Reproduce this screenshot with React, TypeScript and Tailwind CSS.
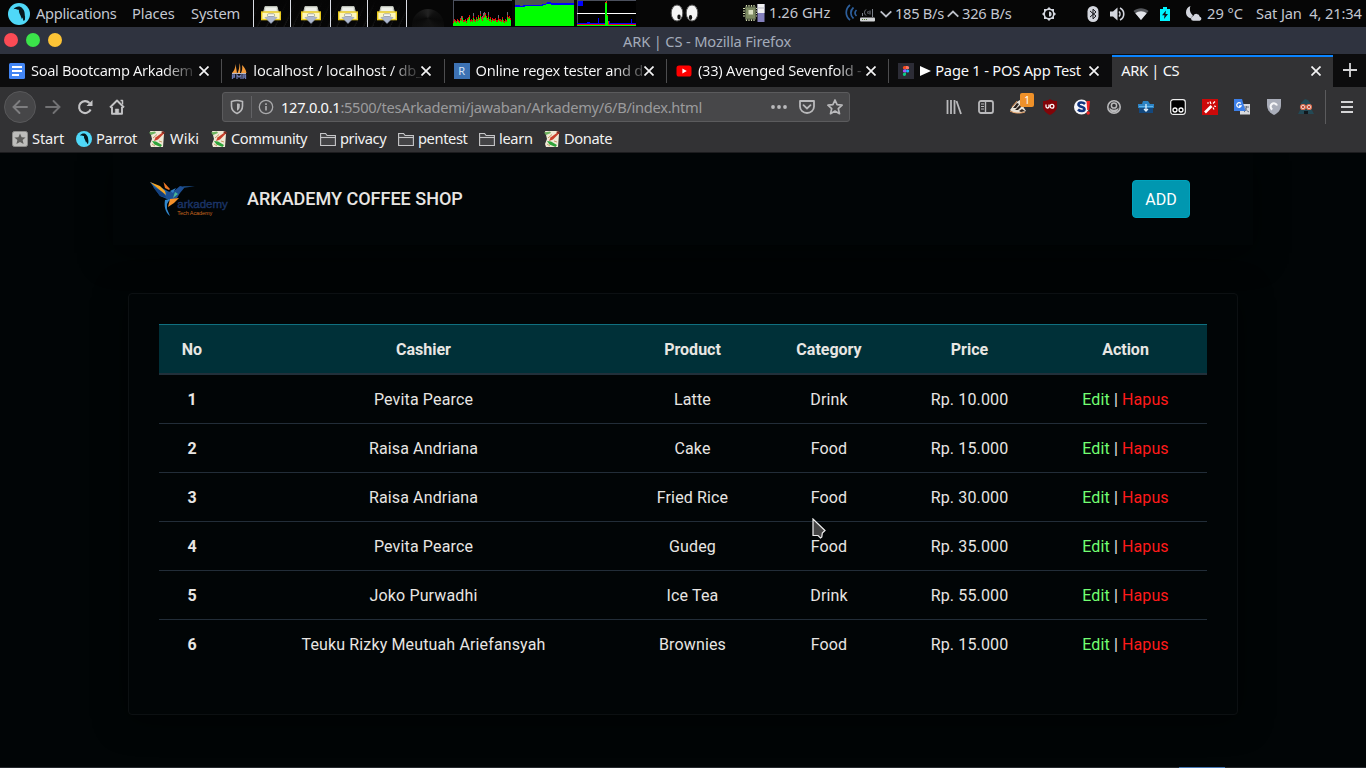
import React from "react";

type Kids = { children?: React.ReactNode };

const Parrot = ({ size }: { size: number }) => (
  <svg width={size} height={size} viewBox="0 0 22 22" className="shrink-0">
    <circle cx="11" cy="11" r="11" fill="#4fd8f8" />
    <path d="M5.500 6.200C8 3.200 12 2.600 14.500 5.400c2.600 2.800 2 5 2.600 8.400l-.2 3.200-1.400 1-1-3.600-.6 1.600-1.400-3.600c-1.400-2.600-1.600-3.400-1.600-5.600C9.600 6.800 7.600 5.600 5.500 6.200z" fill="#06181e" />
  </svg>
);

const Drawer = () => (
  <svg width="20" height="18" viewBox="0 0 20 18">
    <path d="M4 .5h12l1.500 6h-15z" fill="#dfe2da" stroke="#b9bdb4" />
    <path d="M5 2h10l.5 3h-11z" fill="#eef0ea" />
    <rect x=".7" y="6" width="18.600" height="7.600" fill="#fdf6bc" stroke="#e8c91d" strokeWidth="1.400" />
    <rect x="6.500" y="7.800" width="7" height="2.600" rx="1" fill="#fff" stroke="#a9a98a" />
    <path d="M5 11.500l2.500-1h5l2.500 1h1L10 17.500 4 11.500z" fill="#aeb8cf" stroke="#929cb3" strokeWidth=".6" />
  </svg>
);

const cpu = [3, 5, 4, 3, 5, 4, 3, 6, 5, 8, 4, 4, 5, 3, 6, 7, 9, 4, 5, 4, 8, 5, 4, 7, 5, 9, 6, 10, 7, 5, 8, 9, 11, 8, 6, 9, 5, 7, 4, 6, 5, 5, 6, 4, 4, 6, 5, 5, 4, 7, 4, 3, 5, 4, 9, 7, 8, 6];
const CpuGraph = () => (
  <svg width="59" height="26" viewBox="0 0 59 26" shapeRendering="crispEdges">
    <rect width="59" height="26" fill="#000" stroke="#4a4f5c" />
    {cpu.map((h, i) => (
      <g key={i}>
        {[8, 20, 27, 29, 30, 31, 35, 45, 54].includes(i) && <rect x={i} y={26 - h - 5} width="1" height="5" fill="#6b6f75" />}
        <rect x={i} y={26 - h - 2} width="1" height="2" fill="#e01010" />
        <rect x={i} y={26 - h} width="1" height={h} fill="#00ff00" />
      </g>
    ))}
  </svg>
);
const MemGraph = () => (
  <svg width="59" height="26" viewBox="0 0 59 26" shapeRendering="crispEdges">
    <rect width="59" height="26" fill="#4c5350" />
    <path d="M0 5h4l1 1 5-1h14l6-1 2-2 3 0 1 1h23v23H0z" fill="#0000ff" />
    <path d="M0 7h9l2-1h14l5-1 1-1 4 0 2 1h22v21H0z" fill="#00ff00" />
  </svg>
);
const NetGraph = () => (
  <svg width="59" height="26" viewBox="0 0 59 26" shapeRendering="crispEdges">
    <rect width="59" height="26" fill="#000" stroke="#4a4f5c" />
    <rect x="1" y="1" width="5" height="5" fill="#0000ff" />
    <path d="M0 23h10v-1h3v1h8v-5h1v5h6v-2h5v2h21v-4h1v4h4v2H0z" fill="#0000ff" />
    <rect y="24" width="59" height="1" fill="#f01010" />
    <rect y="13" width="59" height="1" fill="#fff" />
    <path d="M28 25V2h1v-1h1v14h1v6h1v4z" fill="#e03010" />
    <path d="M28 25V3h2v13h1v9z" fill="#00ff00" />
    <rect y="25" width="59" height="1" fill="#00ff00" />
  </svg>
);

const Eyes = () => (
  <svg width="30" height="18" viewBox="0 0 30 18">
    <ellipse cx="7" cy="9" rx="5.800" ry="8" fill="#f4f4f4" stroke="#555" />
    <ellipse cx="22" cy="9" rx="5.800" ry="8" fill="#f4f4f4" stroke="#555" />
    <ellipse cx="9" cy="13" rx="1.700" ry="2.400" fill="#111" />
    <ellipse cx="20.500" cy="13.500" rx="1.700" ry="2.400" fill="#111" />
  </svg>
);

const Chip = () => (
  <svg width="22" height="18" viewBox="0 0 22 18">
    <path d="M3.500 1v16M6 1v16M8.500 1v16M11 1v16M0 4.500h14M0 7h14M0 9.500h14M0 12h14" stroke="#d3dcae" strokeWidth="1.200" />
    <rect x="2.500" y="3" width="10" height="12" fill="#7d8a62" stroke="#59634a" />
    <rect x="5.500" y="6" width="4.500" height="4.500" fill="#d9dfc0" />
    <rect x="14.500" y="0" width="7" height="18" fill="#8480bd" />
    <rect x="14.500" y="0" width="7" height="9" fill="#f2f2f2" />
    <path d="M14.500 4h7" stroke="#b9b9c4" />
  </svg>
);

const Wireless = () => (
  <svg width="32" height="18" viewBox="0 0 32 18" fill="none">
    <path d="M5 1C0 5 0 12 5 16" stroke="#2d5f9c" strokeWidth="1.700" />
    <path d="M8.500 3.500c-3.500 3-3.500 8 0 11" stroke="#2d5f9c" strokeWidth="1.700" />
    <path d="M11.500 6c-2 2-2 4 0 6" stroke="#2d5f9c" strokeWidth="1.600" />
    <rect x="15" y="13.500" width="15" height="4" rx="1" fill="#d2d4d6" />
    <path d="M17 15.500h1M19 15.500h1M21 15.500h1" stroke="#567a34" />
    <path d="M27.500 13V5M17.500 9v3M23.500 7c-1 1-1 2 0 3M21 5.500c-2 2-2 4 0 6M25 6.500v4" stroke="#7b8089" strokeWidth="1" />
  </svg>
);

const Chevron = ({ up }: { up?: boolean }) => (
  <svg width="12" height="8" viewBox="0 0 12 8" fill="none" stroke="#bcc0c9" strokeWidth="1.800">
    <path d={up ? "M.7 6.700 6 1.500l5.300 5.200" : "M.7 1.300 6 6.500l5.300-5.200"} />
  </svg>
);

const Brightness = () => (
  <svg width="14" height="14" viewBox="0 0 14 14">
    <path d="M7 0l2 2h3v3l2 2-2 2v3H9l-2 2-2-2H2V9L0 7l2-2V2h3z" fill="#d3d6de" />
    <circle cx="7" cy="7" r="4" fill="#080808" />
    <path d="M7 4.400a2.600 2.600 0 010 5.200z" fill="#d3d6de" />
  </svg>
);
const Bluetooth = () => (
  <svg width="12" height="16" viewBox="0 0 12 16">
    <rect x=".5" width="11" height="16" rx="5.500" fill="#d3d6de" />
    <path d="M3 5l6 5-3 2.800V3.200L9 6l-6 5" fill="none" stroke="#15151a" strokeWidth="1" />
  </svg>
);
const Volume = () => (
  <svg width="16" height="14" viewBox="0 0 16 14">
    <path d="M0 4.500h3L7.500.5v13L3 9.500H0z" fill="#d3d6de" />
    <path d="M9 4.500c1.300 1.300 1.300 3.700 0 5M10 1c5 2.500 5 9.500 0 12" fill="none" stroke="#d3d6de" strokeWidth="1.600" />
  </svg>
);
const Wifi = () => (
  <svg width="16" height="12" viewBox="0 0 16 12">
    <path d="M.5 3C5-.8 11-.8 15.500 3L8 12z" fill="#55575c" />
    <path d="M2.300 5.200c3.400-2.700 8-2.700 11.400 0L8 12z" fill="#e3e5ea" />
  </svg>
);
const Battery = () => (
  <svg width="10" height="14" viewBox="0 0 10 14">
    <path d="M3 0h4v2h3v12H0V2h3z" fill="#00f4ff" />
    <path d="M6 3.500L2 8.300h2.500L4 12l4-5H5.500z" fill="#101418" />
  </svg>
);
const Moon = () => (
  <svg width="16" height="15" viewBox="0 0 16 15" fill="#d3d6de">
    <path d="M4.500 0C1.500.8 0 3.500 0 6.200 0 9.700 2.600 12 5.200 12.300 5.300 11 6 10 7 9.400 4.300 7.500 3 3.500 4.500 0z" />
    <path d="M7.500 14.800a2.400 2.400 0 01-.2-4.800 3.400 3.400 0 016.500.7 2.100 2.100 0 01-.1 4.100z" />
  </svg>
);

function Panel() {
  return (
    <header className="relative flex h-[27px] items-center bg-[#060606] text-[14.67px] leading-[27px] text-[#c3c7d1]">
      <div className="flex w-[253px] items-center pl-2">
        <Parrot size={22} />
        <span className="ml-[6px] w-[96px] tracking-[-0.32px]">Applications</span>
        <span className="w-[59px] tracking-[-0.1px]">Places</span>
        <span className="tracking-[-0.1px]">System</span>
      </div>
      <div className="flex h-full w-[154px] bg-[repeating-linear-gradient(115deg,#060606_0px,#060606_6px,#171717_8px)]">
        {["w-[37px] pl-[7px]", "w-[40px] pl-[10px]", "w-[37px] pl-[7px]", "w-[39px] pl-[9px]"].map((w, i) => (
          <div key={i} className={`${w} flex shrink-0 items-center border-l border-[#dadde4] bg-linear-to-b from-[#050505] to-transparent pt-[3px]`}>
            <Drawer />
          </div>
        ))}
        <i className="w-px shrink-0 bg-[#dadde4]" />
      </div>
      <div className="flex w-[46px] items-center pt-2 pl-[5px]">
        <i className="h-[18px] w-8 rounded-t-full bg-[conic-gradient(from_0deg,#303030,#151515,#0b0b0b,#181818,#151515,#0b0b0b,#1d1d1d,#303030)] opacity-70" />
      </div>
      <div className="flex h-full w-[217px] gap-[3px]">
        <CpuGraph />
        <MemGraph />
        <NetGraph />
      </div>
      <div className="w-[73px] pb-[1px]"><Eyes /></div>
      <div className="w-[26px] pb-[1px]"><Chip /></div>
      <span className="w-[76px] pb-[2px]">1.26 GHz</span>
      <div className="w-[35px] pb-[1px]"><Wireless /></div>
      <div className="w-[15px]"><Chevron /></div>
      <span className="w-[52px] tracking-[-0.3px]">185 B/s</span>
      <div className="w-[15px]"><Chevron up /></div>
      <span className="w-[80px] tracking-[-0.2px]">326 B/s</span>
      <div className="w-[45px]"><Brightness /></div>
      <div className="w-[23px]"><Bluetooth /></div>
      <div className="w-[23px]"><Volume /></div>
      <div className="w-[27px]"><Wifi /></div>
      <div className="w-[26px]"><Battery /></div>
      <div className="w-[21px]"><Moon /></div>
      <span className="w-[49px]">29 °C</span>
      <span className="whitespace-pre tracking-[-0.12px]">Sat Jan  4, 21:34</span>
    </header>
  );
}

function TitleBar() {
  return (
    <div className="relative flex h-[27px] items-center justify-center bg-[#2f333f] pl-12 text-[14.67px] text-[#a3abba]">
      <div className="absolute left-[4px] top-[6px] flex gap-2">
        <i className="size-[14px] rounded-full bg-[#fb4b55]" />
        <i className="size-[14px] rounded-full bg-[#3be34a]" />
        <i className="size-[14px] rounded-full bg-[#fdc436]" />
      </div>
      <span className="pt-[1px] tracking-[-0.15px]">ARK | CS - Mozilla Firefox</span>
    </div>
  );
}

const Cross = () => (
  <svg width="10" height="10" viewBox="0 0 10 10" className="shrink-0" fill="none" stroke="#f4f4f5" strokeWidth="1.700">
    <path d="M.5.5l9 9M9.500.5l-9 9" />
  </svg>
);

const DocsIcon = () => (
  <svg width="16" height="16"><rect width="16" height="16" rx="1.500" fill="#4285f4" /><path d="M3 4h10M3 8h10M3 12h7" stroke="#fff" strokeWidth="2" /></svg>
);
const PmaIcon = () => (
  <svg width="16" height="16" viewBox="0 0 16 16">
    <path d="M4.500 1L6 10H1c2-2 3.500-5 3.500-9zM8.500 0c1 3 1 6.500.5 10H6.500C8 7 8.500 4 8.500 0zM11 2c2.500 2 4 5 4.500 8H10c1.300-2.500 1.500-5 1-8z" fill="#f39b3b" />
    <path d="M1 10.500h14" stroke="#bdb9c4" strokeWidth="1" />
    <path d="M1.500 16v-4h2v2h-2M6 16v-4l2 2 2-2v4M12 16v-4h2.500v4M12 14h2.500" stroke="#6c78af" fill="none" strokeWidth="1.300" />
  </svg>
);
const RegexIcon = () => <span className="flex size-4 shrink-0 items-center justify-center bg-[#3d72b4] text-[11px] leading-4 text-[#d5e3f4]">R</span>;
const YoutubeIcon = () => (
  <svg width="16" height="16"><rect x=".5" y="2.500" width="15" height="11" rx="2.600" fill="#ff0000" /><path d="M6.400 5.600L10.800 8l-4.400 2.400z" fill="#fff" /></svg>
);
const FigmaIcon = () => (
  <svg width="16" height="16" viewBox="0 0 16 16">
    <rect width="16" height="16" fill="#2c2c36" />
    <path d="M8 3H6.500a1.600 1.600 0 000 3.300H8z" fill="#f24e1e" />
    <path d="M8 3h1.500a1.600 1.600 0 010 3.300H8z" fill="#ff7262" />
    <path d="M8 6.300H6.500a1.600 1.600 0 000 3.300H8z" fill="#a259ff" />
    <circle cx="9.600" cy="8" r="1.600" fill="#1abcfe" />
    <path d="M6.500 9.700H8v1.600a1.600 1.600 0 11-1.500-1.600z" fill="#0acf83" />
  </svg>
);

function Tab({ icon, title, spacing, fade }: { icon: React.ReactNode; title: string; spacing: string; fade: string }) {
  return (
    <div className="flex w-[222.300px] shrink-0 items-center pl-[9px]">
      {icon}
      <span className={`ml-[6px] w-[168px] pb-[2px] ${spacing}`}><span className={fade}>{title}</span></span>
      <Cross />
      <i className="ml-auto h-6 w-px bg-[#4d4d4f]" />
    </div>
  );
}

function Tabs() {
  return (
    <div className="flex h-[33px] bg-[#0c0c0d] text-[14.67px] text-[#f9f9fa]">
      <Tab icon={<DocsIcon />} title="Soal Bootcamp Arkadem" spacing="tracking-[-0.36px]" fade="bg-[linear-gradient(to_right,#f9f9fa_82%,#333334_100%)] bg-clip-text text-transparent" />
      <Tab icon={<PmaIcon />} title="localhost / localhost / db_" spacing="tracking-[-0.2px]" fade="bg-[linear-gradient(to_right,#f9f9fa_82%,#777778_90%,#202021_100%)] bg-clip-text text-transparent" />
      <Tab icon={<RegexIcon />} title="Online regex tester and d" spacing="tracking-[-0.3px]" fade="bg-[linear-gradient(to_right,#f9f9fa_82%,#444445_100%)] bg-clip-text text-transparent" />
      <Tab icon={<YoutubeIcon />} title="(33) Avenged Sevenfold -" spacing="tracking-[-0.25px]" fade="bg-[linear-gradient(to_right,#f9f9fa_84%,#333334_100%)] bg-clip-text text-transparent" />
      <div className="flex w-[223px] shrink-0 items-center pl-[9px]">
        <FigmaIcon />
        <span className="ml-[6px] flex w-[168px] items-center pb-[2px] tracking-[-0.2px]">
          <svg width="11" height="10" className="mr-[4px] mt-[2px]"><path d="M0 0l11 5-11 5z" fill="#fff" /></svg>
          Page 1 - POS App Test
        </span>
        <span className="ml-px"><Cross /></span>
      </div>
      <div className="mt-px flex w-[221px] shrink-0 items-center border-t-2 border-[#0a84ff] bg-[#323234] pb-[2px] pl-[9px]">
        <span className="w-[190px] pb-[2px] tracking-[-0.3px]">ARK | CS</span>
        <Cross />
      </div>
      <div className="flex flex-1 items-center justify-center pb-[2px]">
        <svg width="14" height="14" stroke="#d6d6d8" strokeWidth="1.800"><path d="M7 0v14M0 7h14" /></svg>
      </div>
    </div>
  );
}

const Cell = ({ children }: Kids) => <div className="flex w-8 shrink-0 items-center justify-center">{children}</div>;

const extensions: React.ReactNode[] = [
  <svg width="16" height="16" fill="none" stroke="#b9b9bb" strokeWidth="1.800"><path d="M1.500 1v14M5 1v14M8.500 1v14M10.500 2l4.500 13" /></svg>,
  <svg width="16" height="16" fill="none" stroke="#b9b9bb" strokeWidth="1.800"><rect x="1" y="2" width="14" height="12" rx="2" /><path d="M7.500 2v12" strokeWidth="1.400" /><path d="M3 5h3M3 7.500h3M3 10h3" strokeWidth="1" /></svg>,
  <div className="relative size-4">
    <svg width="16" height="16"><path d="M0 11C3 7 6 3 10 1l4 8 2 3-5 2H4z" fill="#e9e3d8" /><path d="M3 9l4-5 2 1-3 4zM5 11l5-5 1.500 1.500L8 11zM9 12l3-2 3 2-4 1z" fill="#2c221d" /><path d="M0 12c4 2 9 3 15 1" stroke="#e9a266" fill="none" /><path d="M2 8l5-6" stroke="#d98c4f" /></svg>
    <span className="absolute -top-[6px] left-[10px] h-[14px] w-[14px] rounded-[2px] bg-[#ef9129] text-center text-[10px] leading-[14px] text-white">1</span>
  </div>,
  <svg width="16" height="16"><path d="M8 0c2 1.500 4 2 7 2v5c0 4-2.500 7-7 9-4.500-2-7-5-7-9V2c3 0 5-.5 7-2z" fill="#820408" /><path d="M4 5.500v2a1.500 1.500 0 003 0v-2" fill="none" stroke="#fff" strokeWidth="1.300" /><circle cx="10" cy="7.300" r="1.900" fill="none" stroke="#fff" strokeWidth="1.300" /></svg>,
  <svg width="16" height="16"><circle cx="7.500" cy="8" r="7.500" fill="#f7f7fa" /><path d="M11 5C9 3 4.500 3 4.500 5.500c0 3 6 1.500 6 4.700 0 2.300-4.500 2.300-6.500.3" fill="none" stroke="#12357f" strokeWidth="2.600" /><path d="M12.500 2H16l-.8 9h-2z" fill="#ee2626" /><circle cx="14.200" cy="14" r="1.700" fill="#ee2626" /></svg>,
  <svg width="16" height="16"><circle cx="8" cy="8" r="6.200" fill="none" stroke="#b9b9bb" strokeWidth="1.600" /><circle cx="8" cy="6.500" r="2.600" fill="none" stroke="#b9b9bb" strokeWidth="1.500" /><path d="M3.500 8.500c2 3 7 3 9 0 0 3.500-2 5-4.500 5s-4.500-1.500-4.500-5z" fill="#b9b9bb" /></svg>,
  <svg width="16" height="16"><path d="M5 2h5l2 3h4v4H0V5h4z" fill="#2c83c4" /><path d="M1 9h14v5H1z" fill="#14487d" /><path d="M1 7h14v1H1z" fill="#5fb1e6" /><path d="M8 5v7M6 10l2 2 2-2" stroke="#e1f2ff" fill="none" strokeWidth="1.300" /></svg>,
  <svg width="16" height="16"><rect x=".7" y=".7" width="14.600" height="14.600" rx="2.500" fill="#000" stroke="#eee" strokeWidth="1.200" /><circle cx="5" cy="11" r="2" fill="none" stroke="#fff" strokeWidth="1.300" /><circle cx="11" cy="11" r="2" fill="none" stroke="#fff" strokeWidth="1.300" /></svg>,
  <svg width="16" height="16"><rect width="16" height="16" fill="#cc0909" /><path d="M3 13.500L9.500 7" stroke="#fff" strokeWidth="2.600" /><path d="M9 5L8 2.500M11 4.500l2-2M12 7l2 .5M11 8.500l1 2M5 4h2" stroke="#fff" strokeWidth="1.200" /></svg>,
  <svg width="16" height="16"><rect x="6" y="5" width="10" height="10.500" fill="#d7d9dd" /><path d="M10 8h5M12.500 7v1c0 2-1 4-2.500 5M11 9c1 2 2 3 4 4" stroke="#68717f" fill="none" /><path d="M0 0h8l3.500 12H0z" fill="#3c7fe8" /><path d="M6.800 4.500A2.300 2.300 0 107.200 6.800H5" stroke="#fff" strokeWidth="1.200" fill="none" /></svg>,
  <svg width="16" height="16"><path d="M1 0h14v6c0 5-3 8-7 10-4-2-7-5-7-10z" fill="#a9adb9" /><path d="M6.300 10.500A3.300 3.300 0 1111 6.500" stroke="#f5f5f7" strokeWidth="2.100" fill="none" /></svg>,
  <svg width="16" height="16"><path d="M0 15l3-6 0-5 4-4 3 1 3 4 0 4 3 6z" fill="#234955" /><circle cx="5" cy="8" r="2.500" fill="#e8e4df" stroke="#e06a4b" strokeWidth="1.200" /><circle cx="11" cy="8" r="2.500" fill="#e8e4df" stroke="#e06a4b" strokeWidth="1.200" /><circle cx="5" cy="8" r="1" fill="#a71f11" /><circle cx="11" cy="8" r="1" fill="#a71f11" /><path d="M6 12h4v3H6z" fill="#10171c" /></svg>,
];

function Toolbar() {
  return (
    <div className="flex h-[39px] items-center bg-[#323234] pt-px">
      <div className="flex w-[222px] items-center pl-1">
        <span className="mr-px flex size-8 items-center justify-center rounded-full border border-[#58585a] bg-[#464648]">
          <svg width="16" height="16" fill="none" stroke="#7e7e80" strokeWidth="1.900" strokeLinecap="round"><path d="M15 8H1.500M7.500 2L1.500 8l6 6" /></svg>
        </span>
        <Cell><svg width="16" height="16" fill="none" stroke="#727274" strokeWidth="1.900" strokeLinecap="round"><path d="M1 8h13.500M8.500 2l6 6-6 6" /></svg></Cell>
        <Cell><svg width="16" height="16" fill="none" stroke="#c4c4c6" strokeWidth="2.100"><path d="M13.600 10.500A6 6 0 1112.500 4" /><path d="M15.500 1v6H9.500z" fill="#c4c4c6" stroke="none" /></svg></Cell>
        <Cell>
          <svg width="16" height="16" fill="none" stroke="#c4c4c6" strokeWidth="1.900" strokeLinejoin="round"><path d="M1 8.500L8 1.500l7 7M3 8v6.800h10V8" /><path d="M11.500 1.500h2v4" strokeWidth="1.500" /><path d="M6.300 15v-5h3.400v5z" fill="#c4c4c6" strokeWidth=".5" /></svg>
        </Cell>
      </div>
      <div className="flex h-[30px] w-[628px] items-center rounded-[3px] border border-[#5b5b5d] bg-[#474749] pl-[6px] text-[14.67px]">
        <svg width="16" height="16" fill="none" stroke="#b9b9bb" strokeWidth="1.600"><path d="M8 1.500c2 0 4 .5 5.500 1V7c0 4-2 6-5.500 7.500C4.500 13 2.500 11 2.500 7V2.500C4 2 6 1.500 8 1.500z" /><path d="M8 4.500c1 0 2 .2 2.800.4V7c0 2.500-1 3.800-2.800 4.800z" fill="#b9b9bb" stroke="none" /></svg>
        <i className="mr-[6px] ml-[6px] h-[22px] w-px bg-[#626265]" />
        <svg width="16" height="16" fill="none" stroke="#a9a9ab" strokeWidth="1.300"><circle cx="8" cy="8" r="6.700" /><path d="M8 7v4.500M8 4.200v1.700" strokeWidth="1.700" /></svg>
        <span className="ml-[7px] w-[490px] tracking-[-0.3px] text-[#9b9b9d]"><span className="text-[#f9f9fa]">127.0.0.1</span>:5500/tesArkademi/jawaban/Arkademy/6/B/index.html</span>
        <svg width="16" height="16" fill="#b9b9bb" className="shrink-0"><circle cx="2" cy="8" r="1.900" /><circle cx="8" cy="8" r="1.900" /><circle cx="14" cy="8" r="1.900" /></svg>
        <svg width="16" height="16" fill="none" stroke="#b9b9bb" strokeWidth="1.800" className="ml-3 shrink-0"><path d="M1 2h14v5.500a7 6.500 0 01-14 0z" strokeLinejoin="round" /><path d="M4.500 6.200L8 9.500l3.500-3.300" strokeLinecap="round" /></svg>
        <svg width="16" height="16" fill="none" stroke="#b9b9bb" strokeWidth="1.700" strokeLinejoin="round" className="ml-3 shrink-0"><path d="M8 1l2.100 4.700 5 .5-3.800 3.400 1.200 5.100L8 12l-4.500 2.700 1.200-5.100L.9 6.200l5-.5z" /></svg>
      </div>
      <div className="ml-[88px] flex">
        {extensions.map((e, i) => <Cell key={i}>{e}</Cell>)}
      </div>
      <i className="ml-[3px] h-[34px] w-px bg-[#5b5b5d]" />
      <svg width="12" height="12" className="ml-[15px]" stroke="#d4d4d6" strokeWidth="1.800"><path d="M0 1h12M0 6h12M0 11h12" /></svg>
    </div>
  );
}

const StartIcon = () => (
  <svg width="16" height="16"><rect x=".5" y=".5" width="15" height="15" rx="2" fill="#bdbdbb" stroke="#8c8c8a" /><path d="M8 2.500l1.600 3.700 4 .3-3 2.600 1 4L8 11l-3.600 2.100 1-4-3-2.600 4-.3z" fill="#5d5d5b" /></svg>
);
const WikiIcon = () => (
  <svg width="16" height="16"><path d="M1 0h13l1 3-1 13H2l-1-3 2-5z" fill="#efe9d6" /><path d="M0 1.500l6-1 1 1.500-5 2z" fill="#6db35e" /><path d="M16 1.500L9 8.500 5 10l1.500-3.500 7-5z" fill="#c9402c" /><path d="M12 1l2-1 2 2-1.500 1z" fill="#7c2a20" /><path d="M3 10l4 .5 6 3.500-1.500 2-6-2.500z" fill="#2fa33a" /><path d="M8 3.500L4 7M10 10l3 1M3 13l3 2" stroke="#c99a68" /></svg>
);
const FolderIcon = () => (
  <svg width="16" height="16" fill="#434345" stroke="#c6c6c8" strokeWidth="1.100"><path d="M.6 14.500v-12h5l1.500 2h8.300v10z" /><path d="M.6 6.500h15" /></svg>
);

function Bookmarks() {
  const items: [React.ReactNode, string, string, string][] = [
    [<StartIcon />, "Start", "w-[64px]", "ml-1 tracking-[-0.15px]"],
    [<Parrot size={16} />, "Parrot", "w-[73px]", "ml-[4px] tracking-[-0.35px]"],
    [<WikiIcon />, "Wiki", "w-[62px]", "ml-[5px]"],
    [<WikiIcon />, "Community", "w-[109px]", "ml-1 tracking-[-0.45px]"],
    [<FolderIcon />, "privacy", "w-[78px]", "ml-1 tracking-[-0.4px]"],
    [<FolderIcon />, "pentest", "w-[81px]", "ml-1 tracking-[-0.4px]"],
    [<FolderIcon />, "learn", "w-[65px]", "ml-1 tracking-[-0.35px]"],
    [<WikiIcon />, "Donate", "w-[80px]", "ml-1 tracking-[-0.4px]"],
  ];
  return (
    <nav className="flex h-[27px] items-center border-b border-[#1c1c1e] bg-[#323234] pl-3 text-[14.67px] text-[#f1f1f2]">
      {items.map(([icon, label, w, text]) => (
        <div key={label} className={`${w} flex shrink-0 items-center`}>{icon}<span className={`${text} pb-[2px]`}>{label}</span></div>
      ))}
    </nav>
  );
}

const ArkademyLogo = () => (
  <svg width="80" height="38" viewBox="0 0 80 38">
    <path d="M1 2l12 6 9 5 1 7-5-1-7-3z" fill="#1a5fa8" />
    <path d="M4 7l9 4 5 7-7-2z" fill="#14407c" />
    <path d="M1 2l10 4 5 5 1 4-5-4z" fill="#f6a624" />
    <path d="M14.500 2l6.500 7-1 1-4-2z" fill="#ee7926" />
    <path d="M18 12l7-1 6-5 5 1-5 6-3 5-8 3-3-4z" fill="#1d4f93" />
    <path d="M21 11l6-3-3 5z" fill="#2f7ec6" />
    <path d="M34 6l12 0-11 2z" fill="#17406e" />
    <path d="M26 12l3 2-5 4z" fill="#4bb795" />
    <path d="M21 19l9-1-5 5-6 4 1-4z" fill="#f4912b" />
    <path d="M16 20l5-1-3 5 0 5 3 7c-5-4-6-10-5-16z" fill="#3187cc" />
    <text x="28.300" y="28" fill="#1b3466" fontSize="11.500" fontFamily="Liberation Sans, sans-serif" textLength="50.500" stroke="#1b3466" strokeWidth=".4">arkademy</text>
    <text x="28.300" y="35" fill="#c9661f" fontSize="5.500" fontFamily="Liberation Sans, sans-serif" textLength="35">Tech Academy</text>
  </svg>
);

const orders = [
  ["Pevita Pearce", "Latte", "Drink", "Rp. 10.000"],
  ["Raisa Andriana", "Cake", "Food", "Rp. 15.000"],
  ["Raisa Andriana", "Fried Rice", "Food", "Rp. 30.000"],
  ["Pevita Pearce", "Gudeg", "Food", "Rp. 35.000"],
  ["Joko Purwadhi", "Ice Tea", "Drink", "Rp. 55.000"],
  ["Teuku Rizky Meutuah Ariefansyah", "Brownies", "Food", "Rp. 15.000"],
];
const columns = "grid grid-cols-[66px_397px_141px_132px_149px_163px] pt-[13px] pb-[11px] text-center";

function Shop() {
  return (
    <main className="flex flex-1 flex-col overflow-hidden bg-[#010506] font-[Roboto,sans-serif] text-base leading-6 text-[#e8e6e3]">
      <div className="ml-[113px] flex h-[92px] w-[1140px] shrink-0 items-center bg-[#010506] pl-[36px] shadow-[0_8px_32px_rgba(0,0,0,0.6)]">
        <ArkademyLogo />
        <h1 className="ml-[18px] w-[885px] text-lg font-medium">ARKADEMY COFFEE SHOP</h1>
        <button className="h-[38px] w-[58px] rounded border border-[#00a3bd] bg-[#0097b0] pt-px text-white">ADD</button>
      </div>
      <section className="mt-12 ml-32 h-[422px] w-[1110px] shrink-0 rounded border border-[#0c1012] bg-[#010506] px-[30px] pt-[30px] shadow-[0_4px_32px_rgba(0,0,0,0.6)]">
        <div className={`${columns} h-[51px] border-t border-b-2 border-t-[#107080] border-b-[#22303a] bg-[#003038] font-bold`}>
          {["No", "Cashier", "Product", "Category", "Price", "Action"].map((h) => <span key={h}>{h}</span>)}
        </div>
        {orders.map((row, i) => (
          <div key={i} className={`${columns} ${i ? "border-t border-[#222d38]" : ""}`}>
            <span className="font-bold">{i + 1}</span>
            {row.map((cell, j) => <span key={j} className="tracking-[0.14px]">{cell}</span>)}
            <span className="tracking-[0.1px]"><a className="text-[#72ff72]">Edit</a> | <a className="text-[#ff1a1a]">Hapus</a></span>
          </div>
        ))}
      </section>
    </main>
  );
}

export default function App() {
  return (
    <div className="relative flex h-[768px] w-[1366px] flex-col overflow-hidden whitespace-nowrap bg-black font-['Noto_Sans',sans-serif]">
      <Panel />
      <TitleBar />
      <Tabs />
      <Toolbar />
      <Bookmarks />
      <Shop />
      <footer className="flex h-px bg-[#25292d]"><i className="ml-[1179px] w-[46px] bg-[#4779b5]" /></footer>
      <svg width="14" height="22" className="absolute top-[518px] left-[812px]"><path d="M1 1v16.500h5l2.500 2.500 1.300-1 .5-4 2.700-2.500z" fill="#454545" stroke="#f0f0f0" strokeWidth="1.200" /></svg>
    </div>
  );
}
